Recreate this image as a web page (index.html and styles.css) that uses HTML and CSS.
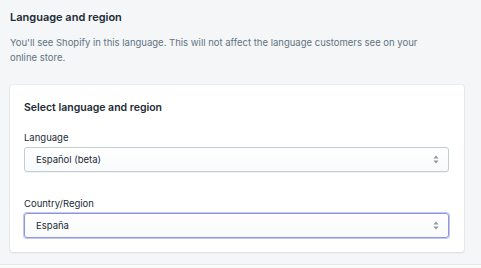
FILE: index.html
```html
<!DOCTYPE html>
<html>
<head>
<link rel="stylesheet" href="styles.css">
</head>
<body>
  <div class="page">
    <div class="section-head">
      <h2 class="section-title">Language and region</h2>
      <p class="section-desc">You'll see Shopify in this language. This will not affect the language customers see on your online store.</p>
    </div>
    <div class="card">
      <h3 class="card-title">Select language and region</h3>
      <div class="field">
        <label class="field-lbl">Language</label>
        <div class="select">
          <span>Español (beta)</span>
          <svg class="arrows" width="6" height="9" viewBox="0 0 6 9"><path d="M3 0.5 L5.5 3.5 H0.5 Z M3 8.5 L5.5 5.5 H0.5 Z" fill="#8a96a3"/></svg>
        </div>
      </div>
      <div class="field">
        <label class="field-lbl">Country/Region</label>
        <div class="select focused">
          <span>España</span>
          <svg class="arrows" width="6" height="9" viewBox="0 0 6 9"><path d="M3 0.5 L5.5 3.5 H0.5 Z M3 8.5 L5.5 5.5 H0.5 Z" fill="#8a96a3"/></svg>
        </div>
      </div>
    </div>
  </div>
  <div class="foot"></div>
</body>
</html>
```

FILE: styles.css
```css
html, body{
  margin: 0;
  padding: 0;
}

body{
  background-color: #f4f6f8;
  font-family: Inter, "Noto Sans", sans-serif;
  color: #212b36;
}

.page{
  padding: 10px 17px 12px 10px;
}

.section-title{
  margin: 0;
  font-size: 11px;
  line-height: 14px;
  font-weight: 600;
}

.section-desc{
  margin: 11px 0 0 0;
  font-size: 9.5px;
  line-height: 15px;
  color: #637381;
  width: 420px;
}

.card{
  margin-top: 20px;
  background-color: #fff;
  border-radius: 3px;
  box-shadow: 0 0 0 1px rgba(63, 63, 68, 0.04), 0 1px 2px rgba(63, 63, 68, 0.1);
  padding: 16px 15px 14px 14px;
}

.card-title{
  margin: 0;
  font-size: 10.5px;
  line-height: 14px;
  font-weight: 600;
}

.field{
  margin-top: 16px;
}

.field + .field{
  margin-top: 25px;
}

.field-lbl{
  display: block;
  font-size: 9.5px;
  line-height: 14px;
  margin-bottom: 2px;
}

.select{
  height: 23px;
  border: 1px solid #c4cdd5;
  border-radius: 3px;
  background: linear-gradient(#fff, #f9fafb);
  box-shadow: 0 1px 0 rgba(22, 29, 37, 0.05);
  display: flex;
  align-items: center;
  justify-content: space-between;
  padding: 0 9px 0 11px;
  font-size: 9.5px;
}

.select.focused{
  border-color: #8f96dc;
  box-shadow: 0 0 0 1px #c4c8f0;
}

.arrows{
  display: block;
}

.foot{
  height: 4px;
  border-top: 1px solid #e4e7ea;
  background-color: #fafbfb;
}
```
